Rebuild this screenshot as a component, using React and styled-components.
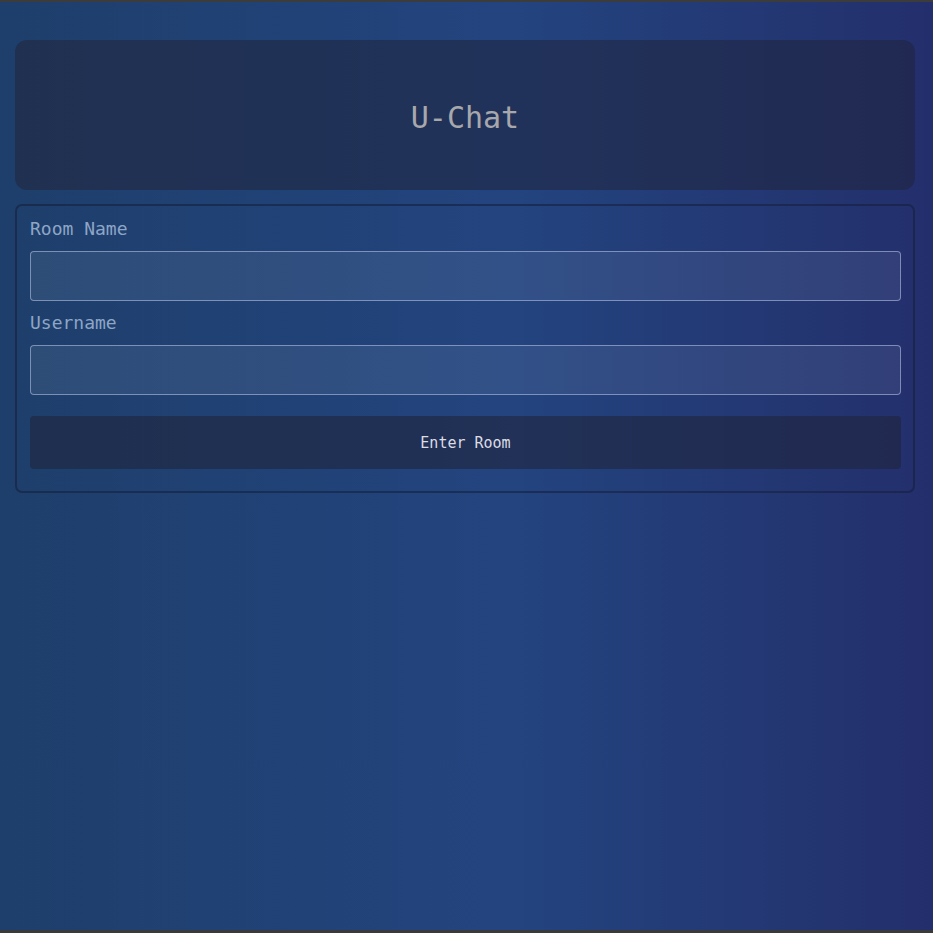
import React from "react";
import styled, { createGlobalStyle } from "styled-components";

const GlobalStyle = createGlobalStyle`
  html, body {
    margin: 0;
    padding: 0;
    background: #3a3a3a;
  }
  * {
    box-sizing: border-box;
  }
`;

const Page = styled.div`
  height: 933px;
  border-top: 2px solid #3c3c3c;
  border-bottom: 3px solid #3a3a3a;
  background: linear-gradient(90deg, #1e3f6b 0%, #23447f 55%, #232f6c 100%);
  padding: 38px 18px 0 15px;
  font-family: "DejaVu Sans Mono", "Liberation Mono", monospace;
`;

const Header = styled.header`
  height: 150px;
  display: flex;
  align-items: center;
  justify-content: center;
  border-radius: 12px;
  background: rgba(32, 36, 60, 0.55);
`;

const Title = styled.h1`
  margin: 4px 0 0;
  font-size: 30px;
  font-weight: normal;
  color: #a8a8ac;
  letter-spacing: 0;
`;

const Form = styled.form`
  margin-top: 14px;
  border: 2px solid rgba(22, 32, 62, 0.6);
  border-radius: 7px;
  padding: 12px 12px 22px 13px;
`;

const Field = styled.div`
  margin-bottom: ${(p) => (p.last ? "21px" : "11px")};
`;

const Label = styled.label`
  display: block;
  font-size: 18px;
  line-height: 22px;
  font-weight: normal;
  color: #8ea6c6;
  margin-bottom: 11px;
`;

const Input = styled.input`
  display: block;
  width: 100%;
  height: 50px;
  border: 1px solid rgba(190, 200, 235, 0.55);
  border-radius: 4px;
  background: rgba(255, 255, 255, 0.07);
  color: #ddd;
  font: inherit;
  padding: 0 12px;
  outline: none;
`;

const Button = styled.button`
  display: block;
  width: 100%;
  height: 53px;
  border: none;
  border-radius: 4px;
  background: rgba(32, 36, 60, 0.6);
  color: #dcdce4;
  font-family: inherit;
  font-size: 15px;
  cursor: pointer;
`;

export default function App() {
  return (
    <>
      <GlobalStyle />
      <Page>
        <Header>
          <Title>U-Chat</Title>
        </Header>
        <Form onSubmit={(e) => e.preventDefault()}>
          <Field>
            <Label htmlFor="room">Room Name</Label>
            <Input id="room" type="text" />
          </Field>
          <Field last>
            <Label htmlFor="user">Username</Label>
            <Input id="user" type="text" />
          </Field>
          <Button type="submit">Enter Room</Button>
        </Form>
      </Page>
    </>
  );
}
